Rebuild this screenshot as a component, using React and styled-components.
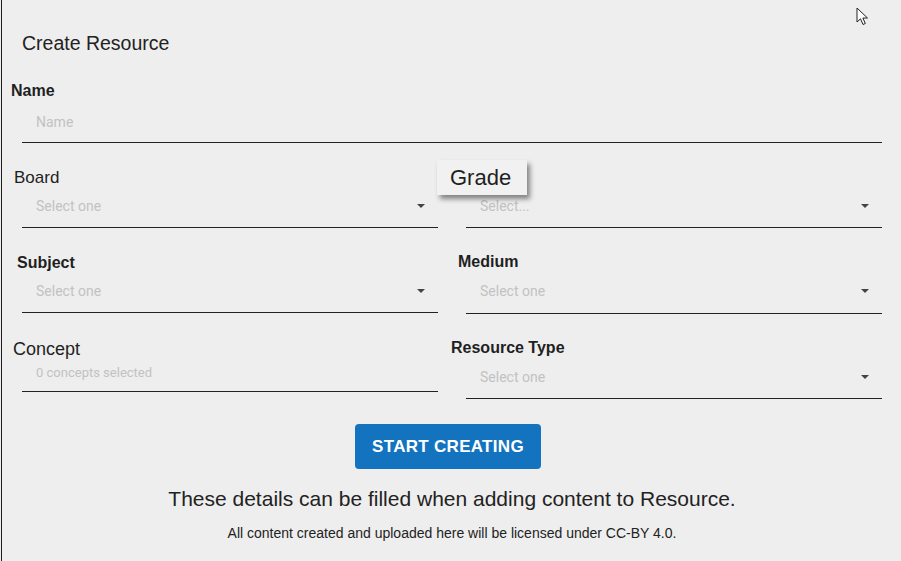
import styled, { createGlobalStyle } from "styled-components";

const GlobalStyle = createGlobalStyle`
  html, body {
    margin: 0;
    padding: 0;
    background: #eeeeee;
  }
  * {
    box-sizing: border-box;
  }
`;

const Page = styled.div`
  position: relative;
  min-height: 561px;
  margin-left: 1px;
  border-left: 1px solid #1e1e1e;
  padding: 31px 19px 0 20px;
  font-family: "Liberation Sans", Arial, sans-serif;
  color: #222;
  overflow: hidden;
`;

const Title = styled.h1`
  margin: 0 0 26px;
  font-size: 19.5px;
  font-weight: 400;
  line-height: 24px;
  color: #222;
`;

const Form = styled.div`
  display: grid;
  grid-template-columns: 1fr 1fr;
  column-gap: 28px;
  row-gap: 25px;
  align-items: start;
`;

const Field = styled.div`
  display: flex;
  flex-direction: column;
  grid-column: ${(p) => (p.$wide ? "1 / -1" : "auto")};
`;

const Label = styled.label`
  display: block;
  height: 20px;
  line-height: 20px;
  margin-left: ${(p) => p.$shift || 0}px;
  margin-top: ${(p) => p.$dy || 0}px;
  margin-bottom: ${(p) => -(p.$dy || 0)}px;
  font-size: ${(p) => p.$size || 16}px;
  font-weight: ${(p) => (p.$bold ? 700 : 400)};
  color: #1f1f1f;
  white-space: nowrap;
`;

const RaisedLabel = styled.label`
  display: block;
  align-self: flex-start;
  height: 35px;
  line-height: 35px;
  margin: -8px 0 -7px -29px;
  padding: 0 16px 0 13px;
  background: #f1f1f1;
  box-shadow: 3px 4px 5px rgba(0, 0, 0, 0.45);
  font-size: 22px;
  color: #1f1f1f;
  position: relative;
  z-index: 1;
`;

const InputRow = styled.div`
  display: flex;
  align-items: flex-start;
  justify-content: space-between;
  height: ${(p) => p.$h}px;
  padding: ${(p) => p.$pt}px 13px 0 14px;
  border-bottom: 1px solid #222;
`;

const Placeholder = styled.span`
  font-family: Roboto, "Liberation Sans", sans-serif;
  font-size: ${(p) => p.$size || 14}px;
  line-height: 16px;
  color: #c2c2c2;
`;

const Caret = styled.span`
  width: 0;
  height: 0;
  margin-top: 6px;
  border-left: 4px solid transparent;
  border-right: 4px solid transparent;
  border-top: 4px solid #444;
`;

const Actions = styled.div`
  display: flex;
  flex-direction: column;
  align-items: center;
  margin-top: 25px;
`;

const StartButton = styled.button`
  width: 186px;
  height: 45px;
  margin-right: 8px;
  border: none;
  border-radius: 4px;
  background: #1373bf;
  color: #fff;
  font-family: "Liberation Sans", Arial, sans-serif;
  font-size: 17px;
  font-weight: 700;
  letter-spacing: 0.3px;
  cursor: pointer;
`;

const Note = styled.p`
  margin: 18px 0 0;
  font-size: 21px;
  line-height: 24px;
  color: #222;
`;

const SmallNote = styled.p`
  margin: 13px 0 0;
  font-size: 14px;
  line-height: 18px;
  color: #222;
`;

const Cursor = styled.svg`
  position: absolute;
  left: 854px;
  top: 7px;
`;

function Select({ placeholder = "Select one", h = 40, pt = 10 }) {
  return (
    <InputRow $h={h} $pt={pt}>
      <Placeholder>{placeholder}</Placeholder>
      <Caret />
    </InputRow>
  );
}

export default function App() {
  return (
    <>
      <GlobalStyle />
      <Page>
        <Title>Create Resource</Title>
        <Form>
          <Field $wide>
            <Label $shift={-11} $bold>Name</Label>
            <InputRow $h={42} $pt={13}>
              <Placeholder>Name</Placeholder>
            </InputRow>
          </Field>

          <Field>
            <Label $shift={-8} $size={17}>Board</Label>
            <Select pt={10} />
          </Field>
          <Field>
            <RaisedLabel>Grade</RaisedLabel>
            <Select placeholder="Select..." pt={10} />
          </Field>

          <Field>
            <Label $shift={-5} $bold>Subject</Label>
            <Select pt={10} />
          </Field>
          <Field>
            <Label $shift={-8} $dy={-1} $bold>Medium</Label>
            <Select h={41} pt={10} />
          </Field>

          <Field>
            <Label $shift={-9} $size={18}>Concept</Label>
            <InputRow $h={33} $pt={6}>
              <Placeholder $size={13}>0 concepts selected</Placeholder>
            </InputRow>
          </Field>
          <Field>
            <Label $shift={-15} $dy={-1} $bold>Resource Type</Label>
            <Select h={40} pt={10} />
          </Field>
        </Form>

        <Actions>
          <StartButton>START CREATING</StartButton>
          <Note>These details can be filled when adding content to Resource.</Note>
          <SmallNote>All content created and uploaded here will be licensed under CC-BY 4.0.</SmallNote>
        </Actions>

        <Cursor width="14" height="20" viewBox="0 0 14 20">
          <path
            d="M1 1 L1 15 L4.5 11.8 L7 17.5 L9.3 16.5 L6.9 11 L11.5 11 Z"
            fill="#fff"
            stroke="#222"
            strokeWidth="1"
            strokeLinejoin="round"
          />
        </Cursor>
      </Page>
    </>
  );
}
